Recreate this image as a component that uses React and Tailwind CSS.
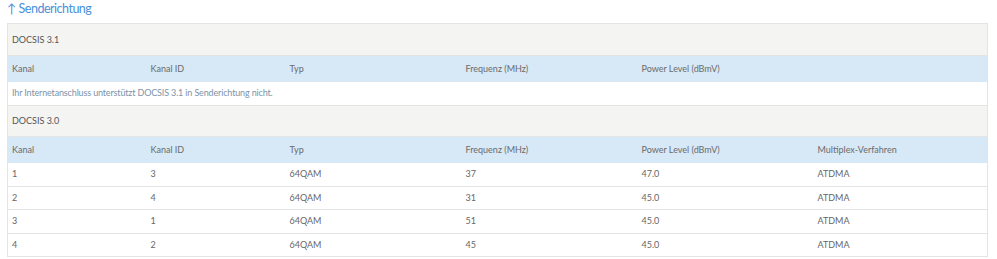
import React from "react";

const cols = ["w-[139px]", "w-[139px]", "w-[176px]", "w-[176px]", "w-[176px]", ""];

function SectionRow({ label, h }) {
  return (
    <tr className="bg-[#f4f4f2]">
      <td colSpan={6} className={`${h} px-[4px] border border-[#e4e4e4] text-[#555]`}>
        {label}
      </td>
    </tr>
  );
}

function HeadRow({ labels }) {
  return (
    <tr className="bg-[#d7e8f6]">
      {[0, 1, 2, 3, 4, 5].map((i) => (
        <td key={i} className={`h-[26px] px-[4px] text-[#6b6b6b] ${cols[i]}`}>
          {labels[i] || ""}
        </td>
      ))}
    </tr>
  );
}

const data = [
  ["1", "3", "64QAM", "37", "47.0", "ATDMA"],
  ["2", "4", "64QAM", "31", "45.0", "ATDMA"],
  ["3", "1", "64QAM", "51", "45.0", "ATDMA"],
  ["4", "2", "64QAM", "45", "45.0", "ATDMA"],
];

export default function App() {
  return (
    <div className="bg-white w-[997px] h-[259px] px-[7px]" style={{ fontFamily: "Lato, 'Open Sans', sans-serif" }}>
      <div className="text-[#4a90d9] text-[12.5px] tracking-[-0.5px] leading-[17px] h-[23px]">↑ Senderichtung</div>
      <table className="w-[981px] border-collapse table-fixed text-[9px] leading-[12px] border border-[#e4e4e4]">
        <colgroup>
          <col className="w-[139px]" />
          <col className="w-[139px]" />
          <col className="w-[176px]" />
          <col className="w-[176px]" />
          <col className="w-[176px]" />
          <col />
        </colgroup>
        <tbody>
          <SectionRow label="DOCSIS 3.1" h="h-[32px]" />
          <HeadRow labels={["Kanal", "Kanal ID", "Typ", "Frequenz (MHz)", "Power Level (dBmV)"]} />
          <tr>
            <td colSpan={6} className="h-[24px] px-[4px] text-[#7d93a8] tracking-[-0.15px] border-b border-[#e4e4e4]">
              Ihr Internetanschluss unterstützt DOCSIS 3.1 in Senderichtung nicht.
            </td>
          </tr>
          <SectionRow label="DOCSIS 3.0" h="h-[31px]" />
          <HeadRow labels={["Kanal", "Kanal ID", "Typ", "Frequenz (MHz)", "Power Level (dBmV)", "Multiplex-Verfahren"]} />
          {data.map((row, r) => (
            <tr key={r} className="border-b border-[#e4e4e4]">
              {row.map((c, i) => (
                <td key={i} className="h-[23.5px] px-[4px] text-[#666]">
                  {c}
                </td>
              ))}
            </tr>
          ))}
        </tbody>
      </table>
    </div>
  );
}
